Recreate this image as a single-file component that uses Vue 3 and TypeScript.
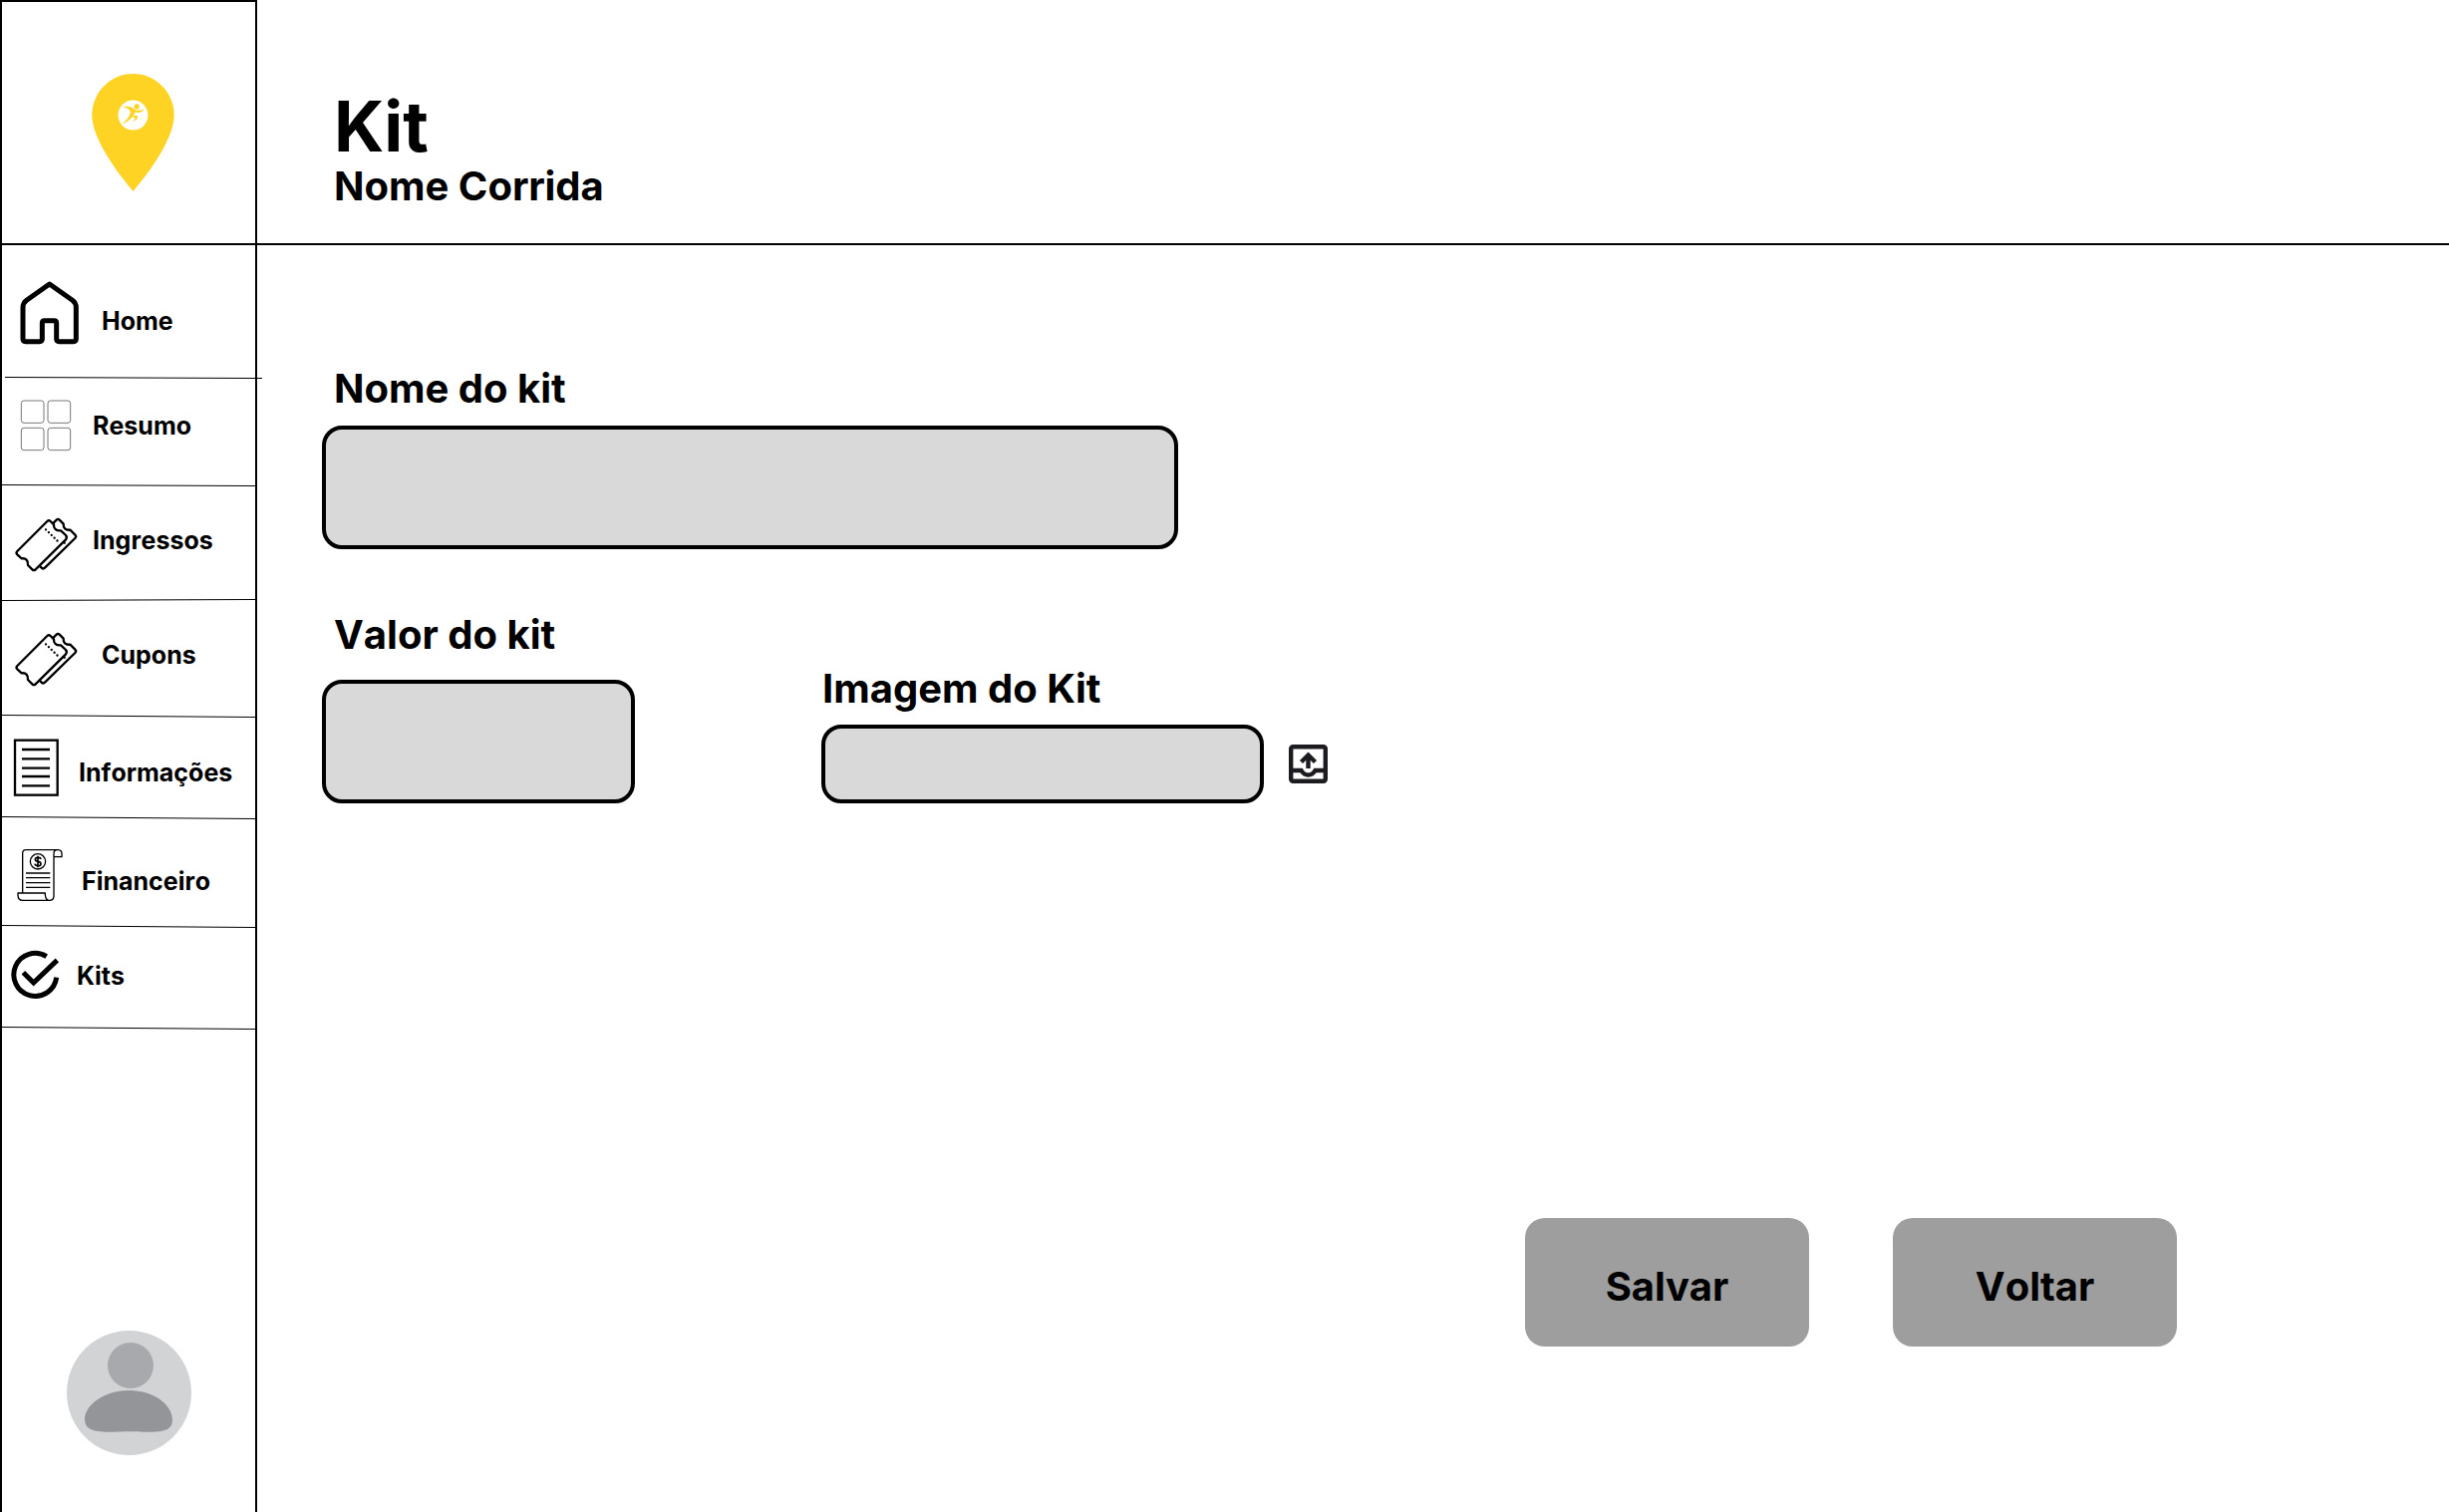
<script setup lang="ts">
import { ref } from 'vue'

interface NavItem {
  id: string
  label: string
  iconWidth: number
  iconTop: number
  line: [number, number]
}

// iconTop is the upper edge of each icon's viewBox; line holds the divider's left and right heights
const navItems: NavItem[] = [
  { id: 'home', label: 'Home', iconWidth: 80, iconTop: 126, line: [1.5, 2.5] },
  { id: 'resumo', label: 'Resumo', iconWidth: 71, iconTop: 441, line: [1.5, 2.5] },
  { id: 'ingressos', label: 'Ingressos', iconWidth: 71, iconTop: 66, line: [2.5, 1.5] },
  { id: 'cupons', label: 'Cupons', iconWidth: 80, iconTop: 66, line: [1.5, 3.5] },
  { id: 'informacoes', label: 'Informações', iconWidth: 57, iconTop: 105, line: [1.5, 3.5] },
  { id: 'financeiro', label: 'Financeiro', iconWidth: 60, iconTop: 432, line: [0.5, 2.5] },
  { id: 'kits', label: 'Kits', iconWidth: 55, iconTop: 117, line: [0.5, 2.5] },
]

const nome = ref('')
const valor = ref('')
const imagem = ref('')
</script>

<template>
  <div class="page">
    <aside class="sidebar">
      <a class="logo" href="#" aria-label="Início">
        <svg width="83" height="118" viewBox="276 222 248 355" aria-hidden="true">
          <path fill="#ffd324" d="M400 222C468 222 524 278 524 347C524 400 480 482 400 577C320 482 276 400 276 347C276 278 332 222 400 222Z" />
          <circle cx="400" cy="347" r="45" fill="#fff" />
          <g fill="#ffd324">
            <circle cx="411" cy="321" r="8" />
            <path d="M370 322C384 319 394 321 401 327C412 335 422 334 433 328C430 338 420 341 408 338C404 343 401 347 398 352C389 363 378 370 366 374C380 362 390 352 392 337C388 328 380 324 370 322Z" />
            <path d="M399 349C406 346 413 347 414 353C414 359 407 365 397 365C404 362 407 358 405 355C403 352 401 352 397 353Z" />
          </g>
        </svg>
      </a>

      <nav class="nav" aria-label="Menu">
        <div v-for="item in navItems" :key="item.id" class="nav-item" :class="`nav-item--${item.id}`">
          <a class="nav-link" href="#">
            <svg :width="item.iconWidth" height="80" :viewBox="`6 ${item.iconTop} ${item.iconWidth * 3} 240`" fill="none" stroke="#000" aria-hidden="true">
              <path v-if="item.id === 'home'" stroke-width="15" stroke-linejoin="round" d="M149 135L218 184Q229 192 229 206V300Q229 308 221 308H178Q170 308 170 300V252Q170 245 163 245H134Q127 245 127 252V300Q127 308 119 308H77Q69 308 69 300V206Q69 192 80 184Z" />
              <g v-else-if="item.id === 'resumo'" stroke-width="3" stroke="#777">
                <rect x="64" y="486" width="68" height="67" rx="8" />
                <rect x="144" y="486" width="68" height="67" rx="8" />
                <rect x="64" y="568" width="68" height="67" rx="8" />
                <rect x="144" y="568" width="68" height="67" rx="8" />
              </g>
              <g v-else-if="item.id === 'ingressos' || item.id === 'cupons'" stroke-width="7" stroke-linejoin="round" stroke-linecap="round">
                <path d="M152 129L162 139C161 150 168 158 183 157L198 171Q203 177 198 184L107 274Q102 279 97 274L84 261C85 247 78 239 65 241L52 229Q47 224 52 219L142 129Q147 124 152 129" />
                <path d="M161 134L170 125Q174 120 179 125L191 137C190 149 197 157 211 155L226 170Q231 175 226 180L135 269Q130 274 125 269L120 264" />
                <path stroke-dasharray="0 12" d="M138 154L176 191M194 194L194 194.1" />
              </g>
              <g v-else-if="item.id === 'informacoes'" stroke-width="7">
                <rect x="45" y="128" width="128" height="165" />
                <path d="M66 156H150M66 184H150M66 212H150M66 237H150M66 265H150" />
              </g>
              <g v-else-if="item.id === 'financeiro'" stroke-width="4" stroke-linejoin="round">
                <path d="M68 588V468Q68 458 78 458H175Q186 459 186 470V479H162V468Q162 458 174 458M162 479V596Q162 610 149 610H68Q54 610 54 594V588H136V594Q138 610 149 610" />
                <circle cx="114" cy="493" r="23" />
                <path stroke-width="5" d="M123 486Q122 481 114 481Q106 481 106 487Q106 492 114 493Q123 494 123 500Q123 506 114 506Q106 506 105 500M114 476V511" />
                <path d="M78 528H151M78 542H151M78 557H151M78 571H151" />
              </g>
              <g v-else stroke-width="15">
                <path d="M140 179A64.500 64.500 0 1 0 170 242" />
                <path d="M70 227L101 258L172 190" />
              </g>
            </svg>
            <span>{{ item.label }}</span>
          </a>
          <svg class="divider" viewBox="0 0 254 4" preserveAspectRatio="none" aria-hidden="true">
            <line x1="0" :y1="item.line[0]" x2="254" :y2="item.line[1]" stroke="#000" />
          </svg>
        </div>
      </nav>

      <a class="avatar" href="#" aria-label="Perfil">
        <svg width="125" height="125" viewBox="201 105 375 375" aria-hidden="true">
          <circle cx="388.500" cy="292.500" r="187.500" fill="#d1d3d4" />
          <circle cx="393" cy="210" r="69" fill="#a7a9ac" />
          <path fill="#939598" d="M388 285C465 285 519 330 519 374C519 400 500 409 455 410C420 411 410 409 388 409C366 409 350 411 318 410C274 409 255 400 255 370C257 330 312 285 388 285Z" />
        </svg>
      </a>
    </aside>

    <main class="main">
      <header class="header">
        <h1>Kit</h1>
        <p>Nome Corrida</p>
      </header>

      <form class="form" @submit.prevent>
        <div class="field field--nome">
          <label for="nome">Nome do kit</label>
          <input id="nome" v-model="nome" type="text" />
        </div>

        <div class="row">
          <div class="field field--valor">
            <label for="valor">Valor do kit</label>
            <input id="valor" v-model="valor" type="text" />
          </div>
          <div class="field field--imagem">
            <label for="imagem">Imagem do Kit</label>
            <input id="imagem" v-model="imagem" type="text" />
          </div>
          <button class="upload" type="button" aria-label="Enviar imagem">
            <svg width="39" height="39" viewBox="0 0 39 39" aria-hidden="true">
              <g fill="none" stroke="#1d1b20" stroke-width="4.400">
                <rect x="2.200" y="2.200" width="34.600" height="34.600" rx="2" />
                <path d="M2 26H12.500Q15 30.500 19.500 30.500Q24 30.500 26.500 26H37" />
                <path d="M19.500 24V11" />
                <path d="M12.500 17.500L19.500 10.500L26.500 17.500" />
              </g>
            </svg>
          </button>
        </div>

        <div class="actions">
          <button class="action" type="submit">Salvar</button>
          <button class="action" type="button">Voltar</button>
        </div>
      </form>
    </main>
  </div>
</template>

<style>
body {
  margin: 0;
  background: #fff;
}
</style>

<style scoped>
.page {
  display: grid;
  grid-template-columns: 258px 1fr;
  min-height: 100vh;
  color: #000;
  font-family: Inter, 'Liberation Sans', sans-serif;
  font-weight: 700;
  font-kerning: none;
}

.page *,
.page {
  box-sizing: border-box;
}

svg {
  display: block;
  flex: none;
  overflow: visible;
}

.sidebar {
  display: flex;
  flex-direction: column;
  border: 2px solid #000;
  border-bottom: 0;
}

.logo {
  padding: 72px 0 52px 90px;
  border-bottom: 2px solid #000;
}

.nav-item {
  position: relative;
  height: 102px;
  padding-top: 15px;
}

.nav-item--home {
  height: 133px;
  padding-top: 36px;
}

.nav-item--resumo {
  height: 108px;
  padding-top: 8px;
}

.nav-item--ingressos {
  height: 115px;
}

.nav-item--cupons {
  height: 116px;
}

.nav-item--informacoes {
  padding-top: 17px;
}

.nav-item--financeiro {
  height: 110px;
  padding-top: 24px;
}

.nav-item--kits {
  padding-top: 9px;
}

.nav-link {
  display: flex;
  align-items: center;
  gap: 20px;
  color: inherit;
  font-size: 25px;
  line-height: 30px;
  text-decoration: none;
}

.divider {
  position: absolute;
  bottom: -2px;
  left: 0;
  width: 100%;
  height: 4px;
}

.nav-item--home .divider {
  left: 3px;
  width: calc(100% + 4px);
}

.avatar {
  margin: auto auto 0;
  padding: 40px 0 57px;
}

.main {
  display: flex;
  flex-direction: column;
  min-width: 0;
}

.header {
  padding: 87px 40px 37px 77px;
  border-bottom: 2px solid #000;
}

h1,
p {
  margin: 0;
}

h1 {
  font-size: 70px;
  line-height: 80px;
}

p {
  font-size: 40px;
  line-height: 40px;
}

.form {
  display: flex;
  flex: 1;
  flex-direction: column;
  padding: 120px 273px 166px 65px;
}

.field {
  display: flex;
  flex-direction: column;
  gap: 13px;
  width: 100%;
}

.field--nome {
  max-width: 859px;
}

.field--valor {
  gap: 21px;
  max-width: 314px;
  margin-right: 187px;
}

.field--imagem {
  gap: 12px;
  max-width: 444px;
  margin-right: 25px;
}

label {
  padding-left: 12px;
  font-size: 40px;
  line-height: 48px;
}

.field--imagem label {
  padding-left: 1px;
}

input {
  width: 100%;
  height: 124px;
  padding: 0 24px;
  border: 4px solid #000;
  border-radius: 20px;
  background: #d9d9d9;
  color: #000;
  font: inherit;
  font-size: 40px;
}

.field--imagem input {
  height: 79px;
}

.row {
  display: flex;
  align-items: flex-end;
  margin-top: 62px;
}

button {
  border: 0;
  color: inherit;
  font: inherit;
  font-kerning: inherit;
  cursor: pointer;
}

.upload {
  margin-bottom: 20px;
  padding: 0;
  background: none;
}

.actions {
  display: flex;
  justify-content: flex-end;
  gap: 84px;
  margin-top: auto;
  padding-top: 40px;
}

.action {
  width: 285px;
  height: 129px;
  padding: 8px 0 0;
  border-radius: 20px;
  background: #9e9e9e;
  font-size: 40px;
  line-height: 48px;
}
</style>
